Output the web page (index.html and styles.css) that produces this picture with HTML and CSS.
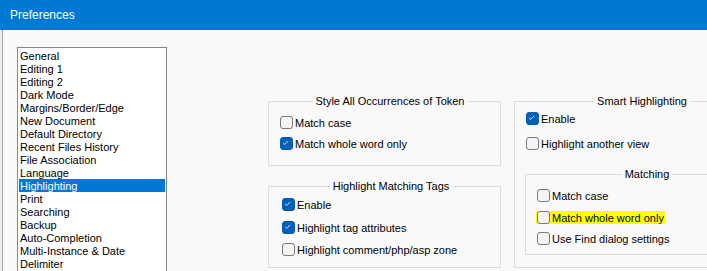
FILE: index.html
```html
<!DOCTYPE html>
<html lang="en">
<head>
    <meta charset="UTF-8">
    <title>Preferences</title>
    <link rel="stylesheet" href="styles.css">
</head>
<body>

    <div class="titlebar">Preferences</div>

    <div class="content">
        <ul class="listbox">
            <li>General</li>
            <li>Editing 1</li>
            <li>Editing 2</li>
            <li>Dark Mode</li>
            <li>Margins/Border/Edge</li>
            <li>New Document</li>
            <li>Default Directory</li>
            <li>Recent Files History</li>
            <li>File Association</li>
            <li>Language</li>
            <li class="selected">Highlighting</li>
            <li>Print</li>
            <li>Searching</li>
            <li>Backup</li>
            <li>Auto-Completion</li>
            <li>Multi-Instance &amp; Date</li>
            <li>Delimiter</li>
        </ul>

        <div class="col-mid">
            <fieldset class="group group-token">
                <legend>Style All Occurrences of Token</legend>
                <label class="opt"><span class="box"></span>Match case</label>
                <label class="opt"><span class="box checked"><svg viewBox="0 0 13 13"><polyline points="3.5,6.8 5.5,8.6 9.5,4.6"/></svg></span>Match whole word only</label>
            </fieldset>

            <fieldset class="group group-tags">
                <legend>Highlight Matching Tags</legend>
                <label class="opt"><span class="box checked"><svg viewBox="0 0 13 13"><polyline points="3.5,6.8 5.5,8.6 9.5,4.6"/></svg></span>Enable</label>
                <label class="opt"><span class="box checked"><svg viewBox="0 0 13 13"><polyline points="3.5,6.8 5.5,8.6 9.5,4.6"/></svg></span>Highlight tag attributes</label>
                <label class="opt"><span class="box"></span>Highlight comment/php/asp zone</label>
            </fieldset>
        </div>

        <div class="col-right">
            <fieldset class="group group-smart">
                <legend>Smart Highlighting</legend>
                <label class="opt"><span class="box checked"><svg viewBox="0 0 13 13"><polyline points="3.5,6.8 5.5,8.6 9.5,4.6"/></svg></span>Enable</label>
                <label class="opt"><span class="box"></span>Highlight another view</label>

                <fieldset class="group group-matching">
                    <legend>Matching</legend>
                    <label class="opt"><span class="box"></span>Match case</label>
                    <label class="opt marked"><span class="box"></span>Match whole word only</label>
                    <label class="opt"><span class="box"></span>Use Find dialog settings</label>
                </fieldset>
            </fieldset>
        </div>
    </div>

</body>
</html>
```

FILE: styles.css
```css
* {
    margin: 0;
    padding: 0;
    box-sizing: border-box;
}

body {
    width: 707px;
    height: 271px;
    overflow: hidden;
    background: #eeeeee;
    font-family: "Liberation Sans", Arial, sans-serif;
    font-size: 11px;
    line-height: 13px;
    color: #000;
}

.titlebar {
    height: 30px;
    background: #0078d4;
    color: #fff;
    font-size: 12px;
    line-height: 31px;
    padding-left: 10px;
}

.content {
    display: flex;
    align-items: flex-start;
    height: 241px;
    margin-left: 2px;
    border-left: 1px solid #a3a3a3;
    background: #f9f9f9;
    padding: 17px 0 0 14px;
}

/* liste des pages */
.listbox {
    list-style: none;
    flex: 0 0 150px;
    height: 240px;
    background: #fff;
    border: 1px solid #828790;
    padding: 1px;
}

.listbox li {
    height: 13px;
    padding-left: 1px;
    line-height: 14px;
    white-space: nowrap;
}

.listbox li.selected {
    background: #0078d7;
    color: #fff;
}

.col-mid {
    flex: 0 0 233px;
    margin: 48px 0 0 101px;
}

.col-right {
    flex: 0 0 258px;
    margin: 48px 0 0 13px;
}

/* group boxes */
.group {
    display: flex;
    flex-direction: column;
    align-items: flex-start;
    min-width: 0;
    border: 1px solid #dcdcdc;
}

.group legend {
    margin: 0 auto;
    padding: 0 3px;
    line-height: 13px;
    white-space: nowrap;
}

.group-token {
    gap: 8px;
    padding: 8px 0 15px 11px;
}

.group-tags {
    margin-top: 14px;
    gap: 9.5px;
    padding: 5px 0 11px 13px;
}

.group-smart {
    gap: 12px;
    padding: 4px 13px 12px 11px;
}

.group-matching {
    align-self: stretch;
    margin: 6px 0 0 -1px;
    gap: 8.5px;
    padding: 8px 0 9px 11px;
}

/* checkboxes */
.opt {
    display: flex;
    align-items: flex-start;
    gap: 2px;
    height: 13px;
    line-height: 14px;
    white-space: nowrap;
}

.box {
    flex: 0 0 13px;
    width: 13px;
    height: 13px;
    border: 1px solid #7a7a7a;
    border-radius: 3px;
    background: #f4f4f4;
}

.box.checked {
    border-color: #005fb8;
    background: #005fb8;
}

.box svg {
    display: block;
    width: 11px;
    height: 11px;
}

.box svg polyline {
    fill: none;
    stroke: #fff;
    stroke-width: 1;
    transform: translate(-1px, -1px);
}

.opt.marked {
    background: #ffff00;
    margin-left: -1px;
    padding: 0 1px;
}
```
